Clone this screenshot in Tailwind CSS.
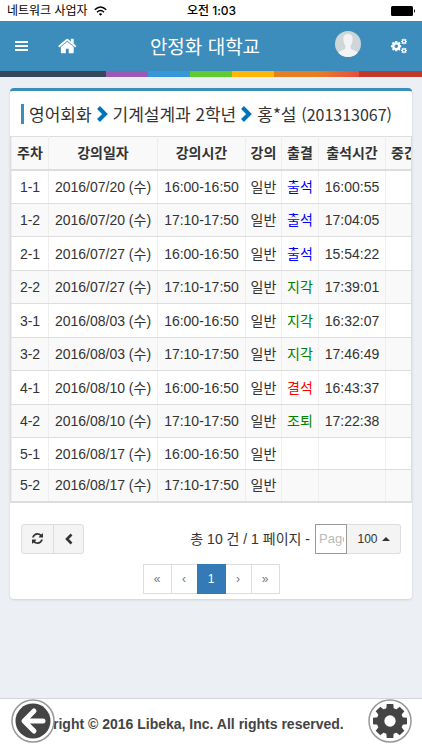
<!DOCTYPE html>
<html lang="ko">
<head>
    <meta charset="UTF-8">
    <meta name="viewport" content="width=device-width, initial-scale=1.0">
    <title>안정화 대학교</title>
    <script src="https://cdn.jsdelivr.net/npm/@tailwindcss/browser@4"></script>
</head>
<body class="flex flex-col min-h-screen bg-[#ecf0f5] text-[#333] text-sm font-['Liberation_Sans','Noto_Sans_CJK_KR',sans-serif]">
    <!-- Shared icons -->
    <svg class="hidden">
        <symbol id="gear" viewBox="-18 -18 36 36">
            <circle r="10" fill="none" stroke="currentColor" stroke-width="8"/>
            <path id="teeth" d="M-4-12L-3.500-18h7L4-12zM-4 12L-3.500 18h7L4 12zM-12-4L-18-3.500v7L-12 4zM12-4L18-3.500v7L12 4z" fill="currentColor"/>
            <use href="#teeth" transform="rotate(45)"/>
        </symbol>
    </svg>

    <!-- Status bar -->
    <div class="grid grid-cols-[1fr_auto_1fr] items-center h-[21px] pl-[7px] pr-[6px] bg-white text-black text-xs leading-4">
        <div class="flex items-center gap-1.5 font-['Inter','Noto_Sans_CJK_KR',sans-serif]">
            <span>네트워크 사업자</span>
            <svg class="w-[13px] h-[10px]" viewBox="0 0 26 20" fill="none" stroke="#000" stroke-width="3">
                <path d="M1.500 7.500Q13-3.500 24.500 7.500"/>
                <path d="M6 12.500Q13 5.500 20 12.500"/>
                <path d="M9.500 16Q13 12.500 16.500 16L13 19.500Z" fill="#000" stroke="none"/>
            </svg>
        </div>
        <span class="font-medium font-['Inter','Noto_Sans_CJK_KR',sans-serif]">오전 1:03</span>
        <svg class="justify-self-end w-[25px] h-[10px]" viewBox="0 0 25 10">
            <rect width="22" height="10" rx="1.500"/><path d="M23 3q2 2 0 4z"/>
        </svg>
    </div>

    <!-- Header -->
    <header class="grid grid-cols-[1fr_auto_1fr] items-center h-[50px] px-[15px] bg-[#3c8dbc] text-white">
        <div class="flex items-center gap-[30px]">
            <button type="button" aria-label="메뉴">
                <svg class="w-[13px] h-3" viewBox="0 0 13 12" fill="#fff"><path d="M0 1h13v2H0zM0 5h13v2H0zM0 9h13v2H0z"/></svg>
            </button>
            <a href="#" aria-label="홈">
                <svg class="w-5 h-5" viewBox="0 0 1792 1792" fill="#fff"><path d="M1408 992v480q0 26-19 45t-45 19h-384v-384h-256v384h-384q-26 0-45-19t-19-45v-480q0-1 .5-3t.5-3l575-474 575 474q1 2 1 6zm223-69l-62 74q-8 9-21 11h-3q-13 0-21-7l-692-577-692 577q-12 8-24 7-13-2-21-11l-62-74q-8-10-7-23.500t11-21.500l719-599q32-26 76-26t76 26l244 204v-195q0-14 9-23t23-9h192q14 0 23 9t9 23v408l219 182q10 8 11 21.500t-7 23.500z"/></svg>
            </a>
        </div>
        <a href="#" class="mr-3 text-[19px] leading-7 font-['Noto_Sans_CJK_KR',sans-serif]">안정화 대학교</a>
        <div class="flex items-center justify-end gap-[30px]">
            <a href="#" aria-label="내 정보">
                <svg class="w-[26px] h-[26px] rounded-full mb-1" viewBox="0 0 26 26">
                    <rect width="26" height="26" fill="#cfd6d9"/>
                    <path d="M13 3c-3.600 0-5 2.500-4.600 6 .1 2.500 1 4.300 2 5.300v3C9 19.500 4 19 2.500 23L3 26h20l.5-3C22 19 17 19.500 15.600 17.300v-3c1-1 1.900-2.800 2-5.300C18 5.500 16.600 3 13 3z" fill="#f1f3f4"/>
                </svg>
            </a>
            <button type="button" aria-label="설정">
                <svg class="w-4 h-4" viewBox="0 0 32 32">
                    <use href="#gear" x="0" y="6" width="21" height="21"/>
                    <use href="#gear" x="20" y="1" width="12" height="12"/>
                    <use href="#gear" x="20" y="19" width="12" height="12"/>
                </svg>
            </button>
        </div>
    </header>
    <div class="grid grid-cols-[25%_10%_10%_10%_10%_10%_10%_15%] h-1.5">
        <div class="bg-[#34495e]"></div>
        <div class="bg-[#9b59b6]"></div>
        <div class="bg-[#3498db]"></div>
        <div class="bg-[#62cb31]"></div>
        <div class="bg-[#ffb606]"></div>
        <div class="bg-[#e67e22]"></div>
        <div class="bg-linear-to-r from-[#e67e22] to-[#e74c3c]"></div>
        <div class="bg-[#c0392b]"></div>
    </div>

    <!-- Attendance box -->
    <main class="flex-1 px-2.5 pt-[11px] pb-8">
        <section class="bg-white rounded border-t-3 border-[#3c8dbc] shadow-sm pb-[5px]">
            <h1 class="flex items-center h-[45px] px-[11px] text-[17px] leading-6 whitespace-nowrap font-['Noto_Sans_CJK_KR',sans-serif]">
                <span class="w-[3px] h-5 mr-[5px] bg-[#3c8dbc]"></span>
                <span>영어회화</span>
                <svg class="w-3 h-4 ml-1 mr-[5px]" viewBox="0 0 12 16"><path d="M2.500 1.500L9 8l-6.500 6.500" fill="none" stroke="#0073b7" stroke-width="4"/></svg>
                <span>기계설계과 2학년</span>
                <svg class="w-3 h-4 ml-1 mr-[5px]" viewBox="0 0 12 16"><path d="M2.500 1.500L9 8l-6.500 6.500" fill="none" stroke="#0073b7" stroke-width="4"/></svg>
                <span>홍*설 <span class="text-base">(201313067)</span></span>
            </h1>

            <div class="overflow-hidden border-x border-[#ddd]">
                <table class="table-fixed w-[474px] border-collapse text-center leading-5 whitespace-nowrap [&_td]:border [&_td]:border-x-[#eee] [&_td]:border-y-[#ddd] [&_th]:border [&_th]:border-x-[#eee] [&_th]:border-y-[#ddd]">
                    <colgroup>
                        <col class="w-[37px]"><col class="w-[109px]"><col class="w-[88px]"><col class="w-[36px]"><col class="w-[37px]"><col class="w-[67px]"><col class="w-[100px]">
                    </colgroup>
                    <thead>
                        <tr class="h-[33px] bg-[#f9f9f9] border-b-2 border-[#ddd]">
                            <th>주차</th><th>강의일자</th><th>강의시간</th><th>강의</th><th>출결</th><th>출석시간</th><th class="text-left pl-[5px]">중간출결</th>
                        </tr>
                    </thead>
                    <tbody class="[&>tr:nth-child(even)]:bg-[#f9f9f9] border-b-2 border-[#ddd]">
                        <tr class="h-[34px]"><td>1-1</td><td>2016/07/20 (수)</td><td>16:00-16:50</td><td>일반</td><td class="text-[#00f]">출석</td><td>16:00:55</td><td></td></tr>
                        <tr class="h-[33px]"><td>1-2</td><td>2016/07/20 (수)</td><td>17:10-17:50</td><td>일반</td><td class="text-[#00f]">출석</td><td>17:04:05</td><td></td></tr>
                        <tr class="h-[34px]"><td>2-1</td><td>2016/07/27 (수)</td><td>16:00-16:50</td><td>일반</td><td class="text-[#00f]">출석</td><td>15:54:22</td><td></td></tr>
                        <tr class="h-[33px]"><td>2-2</td><td>2016/07/27 (수)</td><td>17:10-17:50</td><td>일반</td><td class="text-[#008000]">지각</td><td>17:39:01</td><td></td></tr>
                        <tr class="h-[34px]"><td>3-1</td><td>2016/08/03 (수)</td><td>16:00-16:50</td><td>일반</td><td class="text-[#008000]">지각</td><td>16:32:07</td><td></td></tr>
                        <tr class="h-[33px]"><td>3-2</td><td>2016/08/03 (수)</td><td>17:10-17:50</td><td>일반</td><td class="text-[#008000]">지각</td><td>17:46:49</td><td></td></tr>
                        <tr class="h-[34px]"><td>4-1</td><td>2016/08/10 (수)</td><td>16:00-16:50</td><td>일반</td><td class="text-[#f00]">결석</td><td>16:43:37</td><td></td></tr>
                        <tr class="h-[33px]"><td>4-2</td><td>2016/08/10 (수)</td><td>17:10-17:50</td><td>일반</td><td class="text-[#008000]">조퇴</td><td>17:22:38</td><td></td></tr>
                        <tr class="h-8"><td>5-1</td><td>2016/08/17 (수)</td><td>16:00-16:50</td><td>일반</td><td></td><td></td><td></td></tr>
                        <tr class="h-8"><td>5-2</td><td>2016/08/17 (수)</td><td>17:10-17:50</td><td>일반</td><td></td><td></td><td></td></tr>
                    </tbody>
                </table>
            </div>

            <!-- Toolbar -->
            <div class="flex items-center justify-between mt-[21px] px-[11px]">
                <div class="flex h-[30px] rounded-[3px] border border-[#ddd] bg-[#f4f4f4] text-[#333]">
                    <button type="button" aria-label="새로고침" class="flex items-center justify-center w-8 border-r border-[#ddd]">
                        <svg class="w-[11px] h-[11px]" viewBox="128 128 1536 1536" fill="currentColor"><path d="M1639 1056q0 5-1 7-64 268-268 434.500t-478 166.500q-146 0-282.500-55t-243.500-157l-129 129q-19 19-45 19t-45-19-19-45v-448q0-26 19-45t45-19h448q26 0 45 19t19 45-19 45l-137 137q71 66 161 102t187 36q134 0 250-65t186-179q11-17 53-117 8-23 30-23h192q13 0 22.500 9.500t9.500 22.500zm25-800v448q0 26-19 45t-45 19h-448q-26 0-45-19t-19-45 19-45l138-138q-148-137-349-137-134 0-250 65t-186 179q-11 17-53 117-8 23-30 23h-199q-13 0-22.500-9.500t-9.500-22.500v-7q65-268 270-434.500t480-166.500q146 0 284 55.500t245 156.500l130-129q19-19 45-19t45 19 19 45z"/></svg>
                    </button>
                    <button type="button" aria-label="뒤로" class="flex items-center justify-center w-[29px]">
                        <svg class="w-2 h-3" viewBox="0 0 8 12"><path d="M6.500 1.500L2 6l4.500 4.500" fill="none" stroke="currentColor" stroke-width="2.600"/></svg>
                    </button>
                </div>
                <div class="flex items-center">
                    <label for="page" class="mr-[5px] leading-5">총 10 건 / 1 페이지 -</label>
                    <input id="page" type="text" placeholder="Page" class="w-8 h-[30px] pl-[3px] pr-[2px] border border-[#999] bg-white text-[13px] placeholder:text-[#bbb]">
                    <button type="button" class="flex items-center justify-center gap-1 w-[54px] h-[30px] rounded-r-[3px] border border-l-0 border-[#ddd] bg-[#f4f4f4] text-xs">
                        100
                        <svg class="w-2 h-1" viewBox="0 0 8 4"><path d="M4 0l4 4H0z" fill="currentColor"/></svg>
                    </button>
                </div>
            </div>

            <!-- Pagination -->
            <nav class="flex justify-center mt-2.5 text-xs text-[#777]">
                <a href="#" class="flex items-center justify-center w-[29px] h-[30px] border border-[#ddd]">«</a>
                <a href="#" class="flex items-center justify-center w-[25px] h-[30px] border-y border-[#ddd]">‹</a>
                <a href="#" class="flex items-center justify-center w-[29px] h-[30px] bg-[#337ab7] text-white">1</a>
                <a href="#" class="flex items-center justify-center w-[25px] h-[30px] border-y border-[#ddd]">›</a>
                <a href="#" class="flex items-center justify-center w-[29px] h-[30px] border border-[#ddd]">»</a>
            </nav>
        </section>
    </main>

    <!-- Footer -->
    <footer class="h-[52px] pl-[18px] pt-[15px] bg-white border-t border-[#d2d6de] text-[#444] font-bold leading-5 whitespace-nowrap">
        Copyright © 2016 Libeka, Inc. All rights reserved.
    </footer>

    <!-- Floating buttons -->
    <button type="button" aria-label="뒤로" class="fixed left-[11px] bottom-[7px]">
        <svg class="w-11 h-11" viewBox="0 0 44 44">
            <circle cx="22" cy="22" r="21" fill="#fff" stroke="#999" stroke-width="1.500"/>
            <circle cx="22" cy="22" r="17.500" fill="#444"/>
            <path d="M32 22H14M23 12L13 22l10 10" fill="none" stroke="#fff" stroke-width="5" stroke-linecap="round" stroke-linejoin="round"/>
        </svg>
    </button>
    <button type="button" aria-label="설정" class="fixed right-[10px] bottom-[7px] text-[#444]">
        <svg class="w-11 h-11" viewBox="0 0 44 44">
            <circle cx="22" cy="22" r="21" fill="#fff" stroke="#999" stroke-width="1.500"/>
            <use href="#gear" x="5" y="5" width="34" height="34"/>
        </svg>
    </button>
</body>
</html>
